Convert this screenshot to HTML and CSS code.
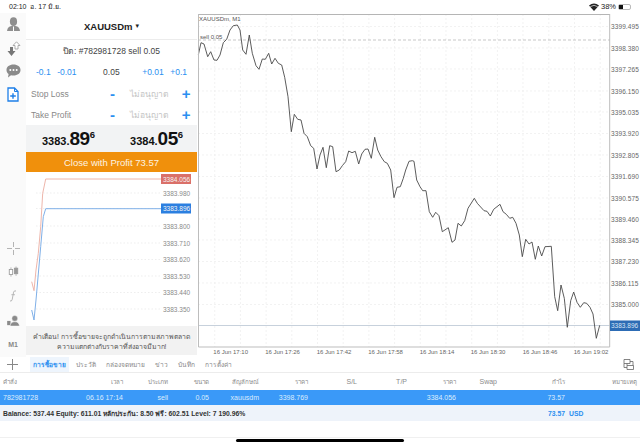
FILE: index.html
```html
<!DOCTYPE html>
<html lang="th">
<head>
  <meta charset="UTF-8" />
  <meta name="viewport" content="width=device-width, initial-scale=1.0"/>
  <title>XAUUSDm, M1</title>
  <link rel="stylesheet" href="styles.css">
</head>
<body>

  <div class="status-bar">
    <div class="status-time">02:10 &nbsp;อ. 17 มิ.ย.</div>
    <div class="status-right">
      <svg class="wifi" width="10" height="8" viewBox="0 0 9 7">
        <path d="M4.5 7 L0 2.2 Q4.5 -1.4 9 2.2 Z" fill="#222"/>
        <path d="M1.2 3.2 Q4.5 .7 7.8 3.2" fill="none" stroke="#fff" stroke-width=".6"/>
      </svg>
      <span>38%</span>
      <span class="battery"><span class="battery-level"></span></span>
    </div>
  </div>

  <div class="main">
    <div class="rail">
      <div class="rail-group">
        <div class="rail-item">
          <svg width="15" height="15" viewBox="0 0 15 15">
            <ellipse cx="7.5" cy="4.6" rx="3.6" ry="4.4" fill="#8e8e8e"/>
            <path d="M1 14 Q1.5 9.5 5.5 9 L9.5 9 Q13.5 9.5 14 14 Z" fill="#8e8e8e"/>
            <rect x="7" y="9.5" width="1" height="4.5" fill="#fff"/>
          </svg>
        </div>
        <div class="rail-item">
          <svg width="15" height="15" viewBox="0 0 15 15">
            <path d="M4 6 H7 V10 H9.5 L5.5 15 L1.5 10 H4 Z" fill="#777"/>
            <path d="M9 8 V4.5 H7 L10.5 .8 L14 4.5 H12 V8 Z" fill="#fff" stroke="#999" stroke-width=".8"/>
          </svg>
        </div>
        <div class="rail-item">
          <svg width="15" height="14" viewBox="0 0 15 14">
            <path d="M7.5 .5 C11.6 .5 14.5 2.8 14.5 6 C14.5 9.2 11.6 11.5 7.5 11.5 C6.6 11.5 5.8 11.4 5 11.2 L2 13.5 L2.6 10 C1.2 9 .5 7.6 .5 6 C.5 2.8 3.4 .5 7.5 .5 Z" fill="#8a8a8a"/>
            <circle cx="4.3" cy="6" r="1" fill="#fff"/>
            <circle cx="7.5" cy="6" r="1" fill="#fff"/>
            <circle cx="10.7" cy="6" r="1" fill="#fff"/>
          </svg>
        </div>
        <div class="rail-item">
          <svg width="12" height="15" viewBox="0 0 12 15">
            <path d="M1 1 H7.5 L11 4.5 V14 H1 Z" fill="#fff" stroke="#1e7fe8" stroke-width="1.3"/>
            <path d="M7.5 1 V4.5 H11" fill="none" stroke="#1e7fe8" stroke-width="1"/>
            <path d="M6 6.2 V11.8 M3.2 9 H8.8" stroke="#1e7fe8" stroke-width="1.4"/>
          </svg>
        </div>
      </div>
      <div class="rail-group rail-bottom">
        <div class="rail-item">
          <svg width="13" height="13" viewBox="0 0 13 13">
            <path d="M6.5 0 V5 M6.5 8 V13 M0 6.5 H5 M8 6.5 H13" stroke="#b4b4b4" stroke-width="1"/>
          </svg>
        </div>
        <div class="rail-item">
          <svg width="11" height="12" viewBox="0 0 13 13">
            <path d="M3.5 1 V12 M9.5 0 V11" stroke="#999" stroke-width=".8"/>
            <rect x="1.5" y="3.5" width="4" height="6" fill="#fff" stroke="#999"/>
            <rect x="7.5" y="2" width="4" height="6.5" fill="#999" stroke="#999"/>
          </svg>
        </div>
        <div class="rail-item">
          <svg width="8" height="12" viewBox="0 0 9 14">
            <path d="M8 1.2 Q6 .2 5.2 2.5 L3.6 11 Q3 13.6 1 12.8" fill="none" stroke="#aaa" stroke-width="1"/>
            <path d="M2.6 5.5 H6.8" stroke="#aaa" stroke-width=".9"/>
          </svg>
        </div>
        <div class="rail-item">
          <svg width="13" height="11" viewBox="0 0 15 13">
            <path d="M0 12 V7 H4 V12 Z" fill="#8a8a8a"/>
            <circle cx="9" cy="4" r="3.4" fill="#8a8a8a" stroke="#fff" stroke-width=".5"/>
            <path d="M3.5 13 Q4 8 9 8 Q14 8 14.5 13 Z" fill="#8a8a8a" stroke="#fff" stroke-width=".5"/>
          </svg>
        </div>
        <div class="rail-item rail-tf">M1</div>
      </div>
    </div>

    <div class="order-panel">
      <div class="order-title">XAUUSDm <span class="caret">▾</span></div>
      <div class="order-close">ปิด: #782981728 sell 0.05</div>
      <div class="volume-row">
        <span class="step">-0.1</span>
        <span class="step">-0.01</span>
        <span class="volume">0.05</span>
        <span class="step">+0.01</span>
        <span class="step">+0.1</span>
      </div>
      <div class="level-row">
        <span class="level-name">Stop Loss</span>
        <span class="level-btn">-</span>
        <span class="level-value">ไม่อนุญาต</span>
        <span class="level-btn level-plus">+</span>
      </div>
      <div class="level-row">
        <span class="level-name">Take Profit</span>
        <span class="level-btn">-</span>
        <span class="level-value">ไม่อนุญาต</span>
        <span class="level-btn level-plus">+</span>
      </div>
      <div class="price-row">
        <div class="price">3383.<span class="price-big">89</span><span class="price-sup">6</span></div>
        <div class="price">3384.<span class="price-big">05</span><span class="price-sup">6</span></div>
      </div>
      <div class="close-btn">Close with Profit 73.57</div>

      <svg class="tick-chart" width="171" height="154" viewBox="26 172 171 154">
        <g class="grid-dots">
          <path d="M36 193H161M36 208.500H161M36 226H161M36 243H161M36 259.500H161M36 276H161M36 292.500H161M36 309H161"/>
        </g>
        <polyline class="ask-line" points="31.700,281.700 34,290.700 36,270 38.300,253.300 40.700,226.700 42.700,193.300 45.700,179 161,179"/>
        <polyline class="bid-line" points="31.700,310 34,320 36,300 40.700,246.700 43.300,216.700 45.700,208.700 161,208.700"/>
        <rect class="ask-tag" x="161" y="174" width="30" height="10"/>
        <rect class="bid-tag" x="161" y="203.500" width="30" height="10"/>
        <text class="tag-text" x="163" y="181.500">3384.056</text>
        <text class="tag-text" x="163" y="211">3383.896</text>
        <text class="tick-label" x="163" y="195.500">3383.980</text>
        <text class="tick-label" x="163" y="228.500">3383.800</text>
        <text class="tick-label" x="163" y="245.500">3383.710</text>
        <text class="tick-label" x="163" y="262">3383.620</text>
        <text class="tick-label" x="163" y="278.500">3383.530</text>
        <text class="tick-label" x="163" y="295">3383.440</text>
        <text class="tick-label" x="163" y="311.500">3383.350</text>
      </svg>

      <div class="warning">คำเตือน! การซื้อขายจะถูกดำเนินการตามสภาพตลาด<br>ความแตกต่างกับราคาที่ส่งอาจมีมาก!</div>
    </div>

    <svg class="chart" width="443" height="344" viewBox="197 13 443 344">
      <path class="grid" d="M198 26.500H610M198 48H610M198 69H610M198 91H610M198 112H610M198 133.500H610M198 155H610M198 176.500H610M198 198H610M198 219H610M198 240H610M198 261.500H610M198 283H610M198 304.500H610"/>
      <path class="grid" d="M214.700 14V347M240.400 14V347M266.100 14V347M291.800 14V347M317.500 14V347M343.200 14V347M368.900 14V347M394.600 14V347M420.300 14V347M446 14V347M471.700 14V347M497.400 14V347M523 14V347M548.800 14V347M574.500 14V347M600.200 14V347"/>
      <path class="sell-line" d="M198 40H610"/>
      <path class="price-line" d="M198 325.500H610"/>
      <polyline class="series" points="198.300,55 201,42.700 204,44 207.700,56.700 210.700,51.700 214,60 217,60.300 220,55 223.300,42.700 226.700,39.300 230,30 233.300,25.700 237.300,25 240,30 242.700,50 246,54.300 249.300,35 252.300,53.300 256,65.700 259,69.300 262.300,59 265.300,59.300 268.700,53.300 271.700,64 275,58.300 278.300,63.300 281.700,65 284.700,77.300 288,96.700 291.300,131.700 294.300,114.300 297.700,119.300 301,120 304,133.300 307.300,136.700 310.700,145.700 313.700,148.300 317,169 320,155 323,147.300 326.300,167.700 329.700,145.700 332.700,146.700 336,171.700 339.300,170 342.300,165.700 345.700,161.700 348.700,151 352,152.700 355.300,151.300 358.700,164 361.700,154 365,149.300 368,149 371.300,158.300 374.700,137.300 377.700,150 381,156.700 384.300,161.700 387.300,163.300 390.700,170 394,197.700 397,187.300 400.300,186.700 403.300,178.300 405.700,170 409,161.300 412.300,160.700 414,161.300 416.700,180 420,186.700 422.700,190.700 426,190.700 429.300,211.700 432.700,217.300 435.700,212.300 439,215.700 442.300,231.700 448.300,227.700 452,242.300 455,240 458,223.300 461.300,226 464.700,220.700 468,208.300 474.300,198.300 477.300,203.300 484,210.700 487,211.300 490.300,216 493.700,209.300 500,204.300 503,211.700 506.300,214.300 509.700,218.300 512.700,217.300 516,223.300 519.300,235 522.300,256.700 525.700,239.300 529,244 532,242 535.300,259.300 538.300,246 541.700,256 545,246.700 551.300,246.300 554.700,296.700 557.700,310.700 561,285 564.300,298.300 567.300,327.300 570.700,300.700 573.700,292 577,302.300 580.300,307.300 583.700,302.700 586.700,303.300 590,307.300 593,314 596.300,338.300 599.700,325.300"/>
      <path class="frame-top" d="M198 14.500H610"/>
      <path class="frame" d="M198.500 14V347H609.700V14"/>
      <text class="chart-name" x="199" y="21">XAUUSDm, M1</text>
      <text class="chart-name" x="200" y="38.500">sell 0.05</text>
      <rect class="last-tag" x="610" y="320.500" width="30" height="10.500"/>
      <text class="last-text" x="611" y="328">3383.896</text>
      <g class="y-labels">
        <text x="611" y="29">3399.495</text>
        <text x="611" y="50.500">3398.380</text>
        <text x="611" y="71.500">3397.265</text>
        <text x="611" y="93.500">3396.150</text>
        <text x="611" y="114.500">3395.035</text>
        <text x="611" y="136">3393.920</text>
        <text x="611" y="157.500">3392.805</text>
        <text x="611" y="178.500">3391.690</text>
        <text x="611" y="200.500">3390.575</text>
        <text x="611" y="221.500">3389.460</text>
        <text x="611" y="242.500">3388.345</text>
        <text x="611" y="264">3387.230</text>
        <text x="611" y="285.500">3386.115</text>
        <text x="611" y="307">3385.000</text>
      </g>
      <g class="x-labels">
        <text x="230.700" y="353.500">16 Jun 17:10</text>
        <text x="282.500" y="353.500">16 Jun 17:26</text>
        <text x="334" y="353.500">16 Jun 17:42</text>
        <text x="385.600" y="353.500">16 Jun 17:58</text>
        <text x="437" y="353.500">16 Jun 18:14</text>
        <text x="488" y="353.500">16 Jun 18:30</text>
        <text x="540" y="353.500">16 Jun 18:46</text>
        <text x="591" y="353.500">16 Jun 19:02</text>
      </g>
    </svg>
  </div>

  <div class="tabs">
    <svg class="tab-add" width="11" height="11" viewBox="0 0 11 11">
      <path d="M5.500 0V11M0 5.500H11" stroke="#888" stroke-width="1"/>
    </svg>
    <span class="tab tab-active">การซื้อขาย</span>
    <span class="tab">ประวัติ</span>
    <span class="tab">กล่องจดหมาย</span>
    <span class="tab">ข่าว</span>
    <span class="tab">บันทึก</span>
    <span class="tab">การตั้งค่า</span>
    <svg class="tab-layout" width="11" height="11" viewBox="0 0 11 11">
      <path d="M1 .5H7V4.500H1ZM4 6.500H10.500V10.500H4ZM7 2.500H10V6.500M4 4.500V6.500M1 4.500V8.500H4" fill="none" stroke="#666" stroke-width=".8"/>
    </svg>
  </div>

  <div class="table-row table-head">
    <span class="cell-left cell-th">คำสั่ง</span>
    <span class="cell-th">เวลา</span>
    <span class="cell-th">ประเภท</span>
    <span class="cell-th">ขนาด</span>
    <span class="cell-th">สัญลักษณ์</span>
    <span class="cell-th">ราคา</span>
    <span>S/L</span>
    <span>T/P</span>
    <span class="cell-th">ราคา</span>
    <span>Swap</span>
    <span class="cell-th">กำไร</span>
    <span class="cell-th">หมายเหตุ</span>
  </div>

  <div class="table-row table-selected">
    <span class="cell-left">782981728</span>
    <span>06.16 17:14</span>
    <span>sell</span>
    <span>0.05</span>
    <span>xauusdm</span>
    <span>3398.769</span>
    <span></span>
    <span></span>
    <span>3384.056</span>
    <span></span>
    <span>73.57</span>
    <span></span>
  </div>

  <div class="table-row table-balance">
    <span class="balance-text">Balance: 537.44 Equity: 611.01 หลักประกัน: 8.50 ฟรี: 602.51 Level: 7 190.96%</span>
    <span class="balance-total">73.57</span>
    <span class="balance-currency">USD</span>
  </div>

  <div class="home-area">
    <div class="home-inner">
      <div class="home-bar"></div>
    </div>
  </div>

</body>
</html>
```

FILE: styles.css
```css
:root {
  --blue: #2b8ff0;
  --gray-text: #8a8a8a;
  --light-line: #ececec;
}

* {
  box-sizing: border-box;
}

body {
  margin: 0;
  width: 640px;
  height: 447px;
  overflow: hidden;
  background-color: white;
  color: #222;
  font-family: "Liberation Sans", "Noto Sans", "DejaVu Sans", sans-serif;
  display: flex;
  flex-direction: column;
}

svg {
  display: block;
}

.status-bar {
  height: 13px;
  flex: none;
  padding: 0 9px 0 9px;
  display: flex;
  align-items: center;
  justify-content: space-between;
  font-size: 7px;
  color: #222;
}

.status-right {
  display: flex;
  align-items: center;
  gap: 2px;
  font-size: 7.5px;
}

.battery {
  width: 13px;
  height: 6px;
  border: 1px solid #bbb;
  border-radius: 2px;
}

.battery-level {
  display: block;
  width: 4px;
  height: 4px;
  background-color: #111;
}

.main {
  height: 344px;
  flex: none;
  display: flex;
}

.rail {
  width: 26px;
  display: flex;
  flex-direction: column;
  justify-content: space-between;
  background-color: #fafafa;
}

.rail-item {
  height: 23.4px;
  display: flex;
  align-items: center;
  justify-content: center;
}

.rail-bottom .rail-item {
  height: 24px;
}

.rail-bottom {
  margin-bottom: 1px;
}

.rail-tf {
  font-size: 7px;
  font-weight: bold;
  color: #888;
}

.order-panel {
  width: 171px;
  display: flex;
  flex-direction: column;
  background-color: white;
}

.order-title,
.order-close,
.volume-row,
.level-row,
.price-row,
.close-btn {
  flex: none;
}

.order-title {
  height: 27px;
  border-bottom: 1px solid var(--light-line);
  display: flex;
  align-items: center;
  justify-content: center;
  gap: 3px;
  font-size: 9.5px;
  font-weight: bold;
  color: #222;
}

.caret {
  font-size: 7px;
}

.order-close {
  height: 21px;
  display: flex;
  align-items: center;
  justify-content: center;
  font-size: 8.5px;
  color: #444;
}

.volume-row {
  height: 22px;
  padding: 0 10px;
  display: flex;
  align-items: center;
  justify-content: space-between;
  font-size: 8.5px;
}

.step {
  color: var(--blue);
}

.volume {
  color: #444;
  margin: 0 16px 0 20px;
}

.level-row {
  height: 21px;
  padding: 0 5px;
  display: flex;
  align-items: center;
  font-size: 8.5px;
}

.level-name {
  width: 76px;
  color: #888;
}

.level-btn {
  width: 12px;
  text-align: center;
  font-size: 15px;
  font-weight: bold;
  color: var(--blue);
  line-height: 1;
}

.level-value {
  width: 62px;
  text-align: center;
  color: #c4c4c4;
}

.price-row {
  height: 27px;
  padding: 0 14px 0 16px;
  display: flex;
  align-items: center;
  justify-content: space-between;
  background-color: #f2f3f4;
}

.price {
  display: flex;
  align-items: baseline;
  font-size: 11px;
  font-weight: bold;
  color: #111;
}

.price-big {
  font-size: 19px;
  letter-spacing: -0.5px;
}

.price-sup {
  font-size: 9.5px;
  align-self: flex-start;
  margin-top: 1px;
}

.close-btn {
  height: 20px;
  background-color: #f0900c;
  color: #fdf3e2;
  display: flex;
  align-items: center;
  justify-content: center;
  font-size: 9.5px;
}

.tick-chart {
  flex: none;
}

.grid-dots path {
  fill: none;
  stroke: #e6e6e6;
  stroke-width: 0.7;
  stroke-dasharray: 1.5 2;
}

.ask-line,
.bid-line {
  fill: none;
  stroke-width: 1;
}

.ask-line {
  stroke: #eeb6ab;
}

.bid-line {
  stroke: #7fb0e8;
}

.ask-tag {
  fill: #da7069;
}

.bid-tag {
  fill: #2b7fe0;
}

.tag-text {
  font-size: 6.5px;
  fill: #f4f4f4;
}

.tick-label {
  font-size: 6.5px;
  fill: #8a8a8a;
}

.warning {
  height: 29px;
  flex: none;
  background-color: #f2f2f2;
  color: #555;
  font-size: 6.9px;
  line-height: 10px;
  text-align: center;
  white-space: nowrap;
  padding-top: 6px;
}

.chart {
  flex: none;
}

.grid {
  fill: none;
  stroke: #ececec;
  stroke-width: 0.7;
  stroke-dasharray: 2 2;
}

.sell-line {
  fill: none;
  stroke: #b0b0b0;
  stroke-width: 0.7;
  stroke-dasharray: 3 2;
}

.price-line {
  fill: none;
  stroke: #b9c5d3;
  stroke-width: 0.8;
}

.series {
  fill: none;
  stroke: #4a4a4a;
  stroke-width: 0.9;
  stroke-linejoin: round;
}

.frame-top {
  stroke: #b5b5b5;
  stroke-width: 1;
}

.frame {
  fill: none;
  stroke: #bdbdbd;
  stroke-width: 1;
}

.chart-name {
  font-size: 6px;
  fill: #555;
}

.last-tag {
  fill: #2d6cb5;
}

.last-text {
  font-size: 6.5px;
  fill: #d6e4f4;
}

.y-labels text {
  font-size: 6.5px;
  fill: #666;
  letter-spacing: 0.1px;
}

.x-labels text {
  font-size: 6px;
  fill: #666;
  text-anchor: middle;
}

.tabs {
  height: 16px;
  flex: none;
  padding: 0 7px;
  display: flex;
  align-items: center;
  border-bottom: 1px solid var(--light-line);
  font-size: 6.6px;
  color: #888;
}

.tab-add {
  margin-right: 15px;
}

.tab {
  margin-right: 10px;
}

.tab-active {
  background-color: #eef5fd;
  color: var(--blue);
  font-weight: bold;
  padding: 2px 3px;
  margin-left: -3px;
  margin-right: 7px;
}

.tab-layout {
  margin-left: auto;
  margin-right: -1px;
}

.table-row {
  display: grid;
  grid-template-columns: 60px 60px 45px 41px 50px 49px 49px 50px 49px 41px 68px 72px;
  padding: 0 3px;
  flex: none;
  align-items: center;
  text-align: right;
  font-size: 7px;
}

.cell-left {
  text-align: left;
}

.cell-th {
  font-size: 6.2px;
}

.table-head {
  height: 17px;
  color: var(--gray-text);
}

.table-selected {
  height: 15px;
  background-color: #3a99f8;
  color: #dcecfd;
}

.table-balance {
  height: 16px;
  background-color: #eef3fa;
  font-weight: bold;
  font-size: 6.8px;
  color: #333;
}

.balance-text {
  grid-column: 1 / 11;
  text-align: left;
  white-space: nowrap;
}

.balance-total {
  color: var(--blue);
}

.balance-currency {
  color: var(--blue);
  text-align: left;
  padding-left: 4px;
}

.home-area {
  flex: 1;
  padding-top: 16px;
}

.home-inner {
  height: 10px;
  padding-top: 1px;
  border-top: 1px solid #f0f0f0;
  display: flex;
  justify-content: center;
}

.home-bar {
  width: 168px;
  height: 2.5px;
  background-color: black;
  border-radius: 2px;
}
```
